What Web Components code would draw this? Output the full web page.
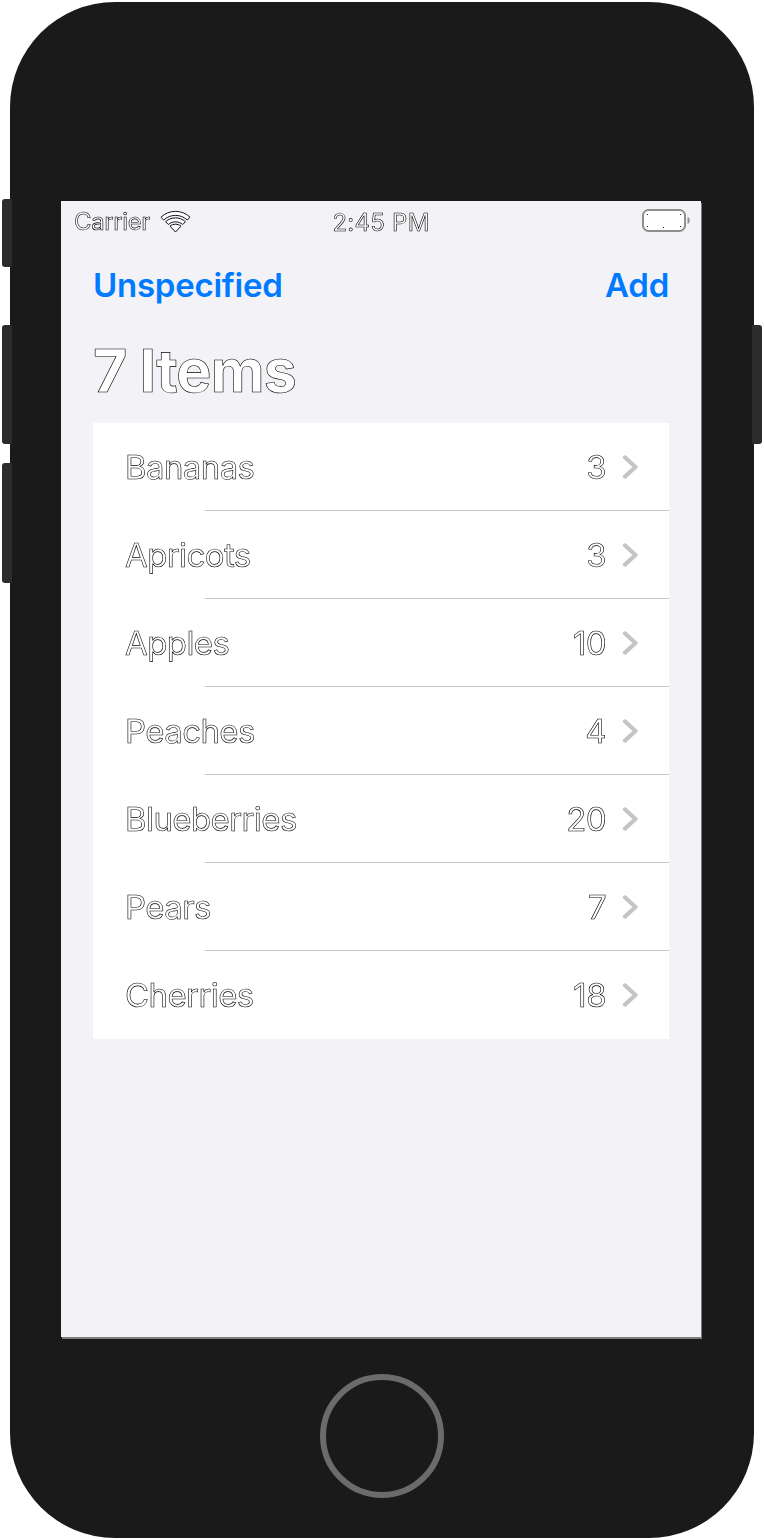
<!DOCTYPE html>
<html lang="en"><head><meta charset="utf-8"><title>Items</title>
<style>
html,body{margin:0;padding:0;background:#fff;}
body{width:764px;height:1540px;overflow:hidden;font-family:Inter,"Liberation Sans",sans-serif;}
</style></head><body>
<phone-device>
  <status-bar slot="screen" carrier="Carrier" time="2:45 PM"></status-bar>
  <nav-bar slot="screen" left="Unspecified" right="Add"></nav-bar>
  <large-title slot="screen">7 Items</large-title>
  <list-group slot="screen">
    <list-row name="Bananas" count="3"></list-row>
    <list-row name="Apricots" count="3"></list-row>
    <list-row name="Apples" count="10"></list-row>
    <list-row name="Peaches" count="4"></list-row>
    <list-row name="Blueberries" count="20"></list-row>
    <list-row name="Pears" count="7"></list-row>
    <list-row name="Cherries" count="18" last></list-row>
  </list-group>
</phone-device>
<script>
const outline = `color:#fff;-webkit-text-stroke:.6px #000;will-change:transform;`;
class Base extends HTMLElement{
  render(html){ this.attachShadow({mode:'open'}).innerHTML = html; }
}
customElements.define('phone-device', class extends Base{
  constructor(){super();this.render(`<style>
    :host{display:flex;width:764px;height:1540px;box-sizing:border-box;padding:2px;align-items:flex-start}
    .rail{width:8px;flex:none;display:flex;flex-direction:column;position:relative;z-index:1}
    .rail i{display:block;width:10px;background:#2c2c2c;border-radius:3px}
    .left i{border-radius:3px 0 0 3px}
    .right i{margin-left:-2px;border-radius:0 3px 3px 0}
    .b1{height:68px;margin-top:197px}
    .b2{height:119px;margin-top:58px}
    .b3{height:120px;margin-top:19px}
    .right .b2{margin-top:323px}
    .body{flex:none;width:744px;height:1536px;box-sizing:border-box;background:#1a1a1a;border-radius:105px;padding-top:199px;display:flex;flex-direction:column;align-items:center}
    .screen{width:640px;height:1136px;margin-left:-2px;background:#f2f2f7;display:flex;flex-direction:column;box-shadow:1px 2px 0 #7d7d7d;flex:none}
    .home{flex:none;width:124px;height:124px;box-sizing:border-box;border:6px solid #6b6b6b;border-radius:50%;margin-top:37px}
  </style>
  <div class="rail left"><i class="b1"></i><i class="b2"></i><i class="b3"></i></div>
  <div class="body"><div class="screen"><slot name="screen"></slot></div><div class="home"></div></div>
  <div class="rail right"><i class="b2"></i></div>`);}
});
customElements.define('status-bar', class extends Base{
  constructor(){super();}
  connectedCallback(){ if(this.shadowRoot)return; this.render(`<style>
    :host{display:grid;grid-template-columns:1fr auto 1fr;align-items:center;height:40px;padding:0 11px 0 13px;font-size:24px;line-height:40px;${outline}}
    .l{display:flex;align-items:center;gap:10px;letter-spacing:-.4px;height:40px}
    .l span{padding-top:2px}
    .t{margin-left:-2px;letter-spacing:.25px;padding-top:2px;height:40px;box-sizing:border-box}
    .r{display:flex;justify-content:flex-end}
    svg{display:block}
  </style>
  <div class="l"><span>${this.getAttribute('carrier')}</span>
    <svg width="31" height="23" viewBox="0 0 31 23"><g fill="#fff" stroke="#111" stroke-width="1">
      <path d="M1 7.2C9 -0.6 22 -0.6 30 7.2L27.3 10C20.6 3.8 10.4 3.8 3.7 10Z"/>
      <path d="M5.6 11.7C11.3 6.6 19.7 6.6 25.4 11.7L22.7 14.5C18.5 10.9 12.5 10.9 8.3 14.5Z"/>
      <path d="M10 16.1C13.2 13.6 17.8 13.6 21 16.1L15.500 22Z"/></g></svg></div>
  <div class="t">${this.getAttribute('time')}</div>
  <div class="r"><svg width="48" height="24" viewBox="0 0 48 24">
    <rect x="1" y="1" width="42" height="21" rx="5.5" fill="#fff" stroke="#8e8e8e" stroke-width="2"/>
    <path d="M45.5 8c1.5.4 2.2 1.8 2.2 3.5s-.7 3.100-2.200 3.500z" fill="#8e8e8e"/>
    <g fill="#222"><rect x="5" y="5" width="1" height="1"/><rect x="38" y="5" width="1" height="1"/><rect x="5" y="17" width="1" height="1"/><rect x="38" y="17" width="1" height="1"/><rect x="21" y="18" width="1" height="1"/></g>
  </svg></div>`);}
});
customElements.define('nav-bar', class extends Base{
  constructor(){super();}
  connectedCallback(){ if(this.shadowRoot)return; this.render(`<style>
    :host{display:flex;justify-content:space-between;align-items:center;height:88px;padding:0 32px;font-size:33px;font-weight:600;letter-spacing:-.25px;color:#007aff}
  </style><span>${this.getAttribute('left')}</span><span>${this.getAttribute('right')}</span>`);}
});
customElements.define('large-title', class extends Base{
  constructor(){super();this.render(`<style>
    :host{display:block;height:94px;padding:0 32px;overflow:hidden;font-size:59px;font-weight:700;letter-spacing:-.85px;line-height:84px;${outline}}
  </style><slot></slot>`);}
});
customElements.define('list-group', class extends Base{
  constructor(){super();this.render(`<style>
    :host{display:flex;flex-direction:column;margin:0 32px;background:#fff}
  </style><slot></slot>`);}
});
customElements.define('list-row', class extends Base{
  constructor(){super();}
  connectedCallback(){ if(this.shadowRoot)return; this.render(`<style>
    :host{display:flex;align-items:center;height:88px;box-sizing:border-box;padding:0 31px 0 32px;position:relative;font-size:33px;letter-spacing:-.6px;${outline}}
    .n{flex:1}
    .c{margin-right:16px}
    svg{display:block}
    .sep{position:absolute;left:112px;right:0;bottom:0;height:1px;background:#c6c6c8}
  </style><span class="n">${this.getAttribute('name')}</span><span class="c">${this.getAttribute('count')}</span>
  <svg width="16" height="24" viewBox="0 0 16 24"><path d="M3 2.500L13.500 12L3 21.500" fill="none" stroke="#c4c4c7" stroke-width="4.200" stroke-linejoin="round" stroke-linecap="round"/></svg>
  ${this.hasAttribute('last')?'':'<div class="sep"></div>'}`);}
});
</script>
</body></html>
